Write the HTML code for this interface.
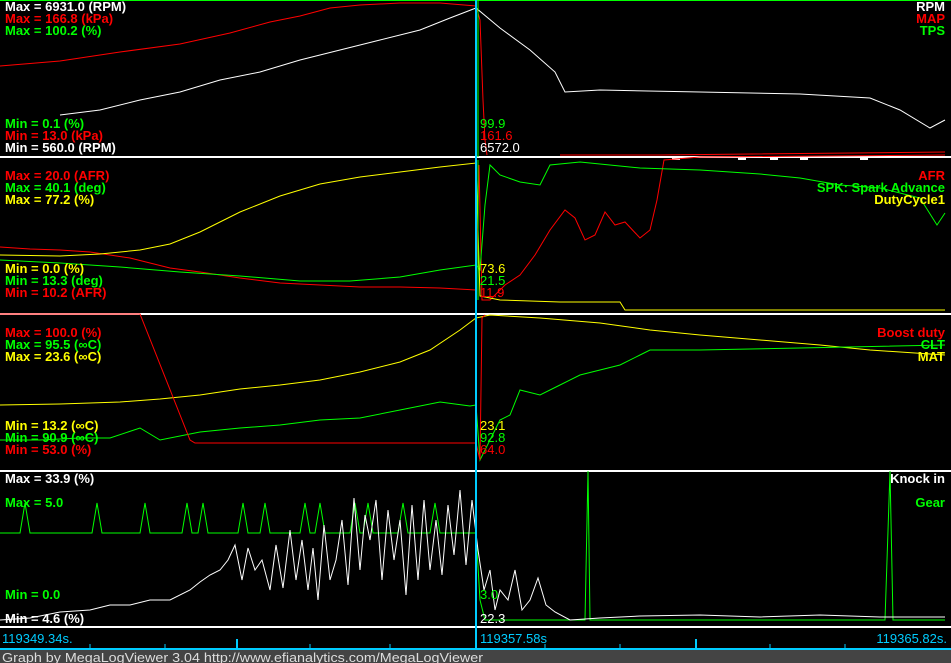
<!DOCTYPE html>
<html><head><meta charset="utf-8"><style>
html,body{margin:0;padding:0;background:#000;width:951px;height:663px;overflow:hidden}
svg{display:block}
text{font-family:"Liberation Sans",sans-serif;font-size:13px}
</style></head><body>
<svg width="951" height="663" viewBox="0 0 951 663">
<rect width="951" height="663" fill="#000"/>
<line x1="0" y1="0.5" x2="951" y2="0.5" stroke="#0f0"/>
<g stroke="#fff" stroke-width="2">
<line x1="0" y1="157" x2="951" y2="157"/>
<line x1="0" y1="314" x2="951" y2="314"/>
<line x1="0" y1="471" x2="951" y2="471"/>
<line x1="0" y1="627" x2="951" y2="627"/>
</g>
<polyline fill="none" stroke="#f00" points="0,66 60,61 120,52 180,44 230,33 270,22 300,16 330,8 360,5 400,3 440,3 476,6 480,20 483,100 485,140 487,155"/>
<polyline fill="none" stroke="#fff" points="60,115 100,110 140,100 180,92 220,80 260,72 300,60 340,50 380,40 420,30 450,18 476,8 500,28 530,50 555,72 565,92 600,90 700,92 800,94 870,98 900,110 930,128 945,120"/>
<line x1="478" y1="0" x2="478" y2="157" stroke="#0f0"/>
<polyline fill="none" stroke="#f00" points="560,155 660,155 945,152"/>
<g fill="#fff"><rect x="672" y="158" width="8" height="2"/><rect x="738" y="158" width="8" height="2"/><rect x="770" y="158" width="8" height="2"/><rect x="800" y="158" width="8" height="2"/><rect x="860" y="158" width="8" height="2"/></g>
<polyline fill="none" stroke="#f00" points="0,247 30,249 60,250 90,252 130,258 170,268 200,272 240,278 280,283 320,285 360,287 400,287 440,288 476,290 479,165 482,300 490,300 505,285 520,275 535,255 550,230 565,210 575,218 585,240 595,235 605,212 615,225 625,222 640,238 650,230 657,200 664,160 700,157 945,155"/>
<polyline fill="none" stroke="#0f0" points="0,260 60,263 120,267 180,272 240,276 300,281 350,281 400,277 440,270 476,265 480,270 485,205 490,165 500,175 520,182 540,185 550,165 580,162 640,168 700,170 760,174 800,178 840,185 880,188 920,198 937,225 945,213"/>
<polyline fill="none" stroke="#ff0" points="0,255 60,256 100,254 140,250 170,244 200,232 240,212 280,196 320,184 360,177 400,172 440,167 476,163 480,296 500,300 560,302 620,302 625,310 945,310"/>
<line x1="478" y1="160" x2="478" y2="300" stroke="#0f0"/>
<polyline fill="none" stroke="#ff0" points="0,405 60,404 120,402 160,399 200,395 240,389 280,385 320,380 360,372 400,362 430,350 460,330 476,318 490,315 540,318 600,323 650,330 700,335 760,340 820,345 870,350 945,355"/>
<polyline fill="none" stroke="#0f0" points="0,440 40,440 80,438 110,438 140,428 160,440 200,432 240,428 280,425 320,420 360,418 400,410 440,402 470,406 476,405 480,460 490,440 500,420 510,415 520,390 540,395 560,385 580,375 600,370 620,365 640,355 650,350 700,350 800,348 945,345"/>
<polyline fill="none" stroke="#f00" points="0,314 140,314 190,440 195,443 476,443 480,460 482,318 485,315"/>
<polyline fill="none" stroke="#0f0" points="0,533 20,533 25,503 30,533 92,533 97,503 102,533 140,533 145,503 150,533 182,533 187,503 192,533 198,533 203,503 208,533 238,533 243,503 248,533 260,533 265,503 270,533 300,533 305,503 310,533 315,533 320,503 325,533 350,533 355,503 360,533 363,533 368,503 373,533 398,533 403,503 408,533 430,533 435,503 440,533 476,533 480,600 485,620 585,620 588,471 590,620 885,620 890,471 893,620 945,620"/>
<polyline fill="none" stroke="#fff" points="0,620 30,618 60,612 90,610 110,605 130,605 150,600 170,600 190,590 200,582 210,575 220,570 228,560 235,545 242,580 248,548 255,570 262,560 270,590 276,545 283,588 290,530 296,580 302,540 308,590 313,548 318,600 324,525 330,580 336,560 342,520 348,585 354,498 360,570 365,515 370,540 376,500 382,580 388,510 394,560 400,520 406,595 412,505 418,580 424,500 430,570 436,520 442,575 448,505 454,555 460,490 466,565 472,500 478,550 484,590 490,570 495,610 500,590 508,600 515,570 522,610 530,600 538,578 546,605 555,612 570,620 600,618 640,616 700,615 760,617 820,615 880,617 945,617"/>
<line x1="476" y1="0" x2="476" y2="649" stroke="#0cf" stroke-width="2"/>
<line x1="0" y1="649" x2="951" y2="649" stroke="#0cf" stroke-width="2"/>
<g stroke="#0cf" stroke-width="2">
<line x1="237" y1="639" x2="237" y2="649"/><line x1="696" y1="639" x2="696" y2="649"/>
</g>
<g stroke="#0cf"><line x1="545" y1="644" x2="545" y2="649"/><line x1="620" y1="644" x2="620" y2="649"/><line x1="770" y1="644" x2="770" y2="649"/><line x1="845" y1="644" x2="845" y2="649"/><line x1="90" y1="644" x2="90" y2="649"/><line x1="165" y1="644" x2="165" y2="649"/><line x1="310" y1="644" x2="310" y2="649"/><line x1="390" y1="644" x2="390" y2="649"/></g>
<rect x="0" y="650" width="951" height="13" fill="#444"/>
<g font-weight="bold">
<text x="5" y="11" fill="#fff">Max = 6931.0 (RPM)</text>
<text x="5" y="23" fill="#f00">Max = 166.8 (kPa)</text>
<text x="5" y="35" fill="#0f0">Max = 100.2 (%)</text>
<text x="5" y="128" fill="#0f0">Min = 0.1 (%)</text>
<text x="5" y="140" fill="#f00">Min = 13.0 (kPa)</text>
<text x="5" y="152" fill="#fff">Min = 560.0 (RPM)</text>
<text x="945" y="11" fill="#fff" text-anchor="end">RPM</text>
<text x="945" y="23" fill="#f00" text-anchor="end">MAP</text>
<text x="945" y="35" fill="#0f0" text-anchor="end">TPS</text>
<text x="5" y="180" fill="#f00">Max = 20.0 (AFR)</text>
<text x="5" y="192" fill="#0f0">Max = 40.1 (deg)</text>
<text x="5" y="204" fill="#ff0">Max = 77.2 (%)</text>
<text x="5" y="273" fill="#ff0">Min = 0.0 (%)</text>
<text x="5" y="285" fill="#0f0">Min = 13.3 (deg)</text>
<text x="5" y="297" fill="#f00">Min = 10.2 (AFR)</text>
<text x="945" y="180" fill="#f00" text-anchor="end">AFR</text>
<text x="945" y="192" fill="#0f0" text-anchor="end">SPK: Spark Advance</text>
<text x="945" y="204" fill="#ff0" text-anchor="end">DutyCycle1</text>
<text x="5" y="337" fill="#f00">Max = 100.0 (%)</text>
<text x="5" y="349" fill="#0f0">Max = 95.5 (∞C)</text>
<text x="5" y="361" fill="#ff0">Max = 23.6 (∞C)</text>
<text x="5" y="430" fill="#ff0">Min = 13.2 (∞C)</text>
<text x="5" y="442" fill="#0f0">Min = 90.9 (∞C)</text>
<text x="5" y="454" fill="#f00">Min = 53.0 (%)</text>
<text x="945" y="337" fill="#f00" text-anchor="end">Boost duty</text>
<text x="945" y="349" fill="#0f0" text-anchor="end">CLT</text>
<text x="945" y="361" fill="#ff0" text-anchor="end">MAT</text>
<text x="5" y="483" fill="#fff">Max = 33.9 (%)</text>
<text x="5" y="507" fill="#0f0">Max = 5.0</text>
<text x="5" y="599" fill="#0f0">Min = 0.0</text>
<text x="5" y="623" fill="#fff">Min = 4.6 (%)</text>
<text x="945" y="483" fill="#fff" text-anchor="end">Knock in</text>
<text x="945" y="507" fill="#0f0" text-anchor="end">Gear</text>
</g>
<g font-size="14">
<text x="480" y="128" fill="#0f0">99.9</text>
<text x="480" y="140" fill="#f00">161.6</text>
<text x="480" y="152" fill="#fff">6572.0</text>
<text x="480" y="273" fill="#ff0">73.6</text>
<text x="480" y="285" fill="#0f0">21.5</text>
<text x="480" y="297" fill="#f00">11.9</text>
<text x="480" y="430" fill="#ff0">23.1</text>
<text x="480" y="442" fill="#0f0">92.8</text>
<text x="480" y="454" fill="#f00">64.0</text>
<text x="480" y="599" fill="#0f0">3.0</text>
<text x="480" y="623" fill="#fff">22.3</text>
<text x="2" y="643" fill="#0cf">119349.34s.</text>
<text x="480" y="643" fill="#0cf">119357.58s</text>
<text x="947" y="643" fill="#0cf" text-anchor="end">119365.82s.</text>
<text x="2" y="662" fill="#ddd" font-size="14" textLength="481" lengthAdjust="spacingAndGlyphs">Graph by MegaLogViewer 3.04 http://www.efianalytics.com/MegaLogViewer</text>
</g>
</svg>
</body></html>
